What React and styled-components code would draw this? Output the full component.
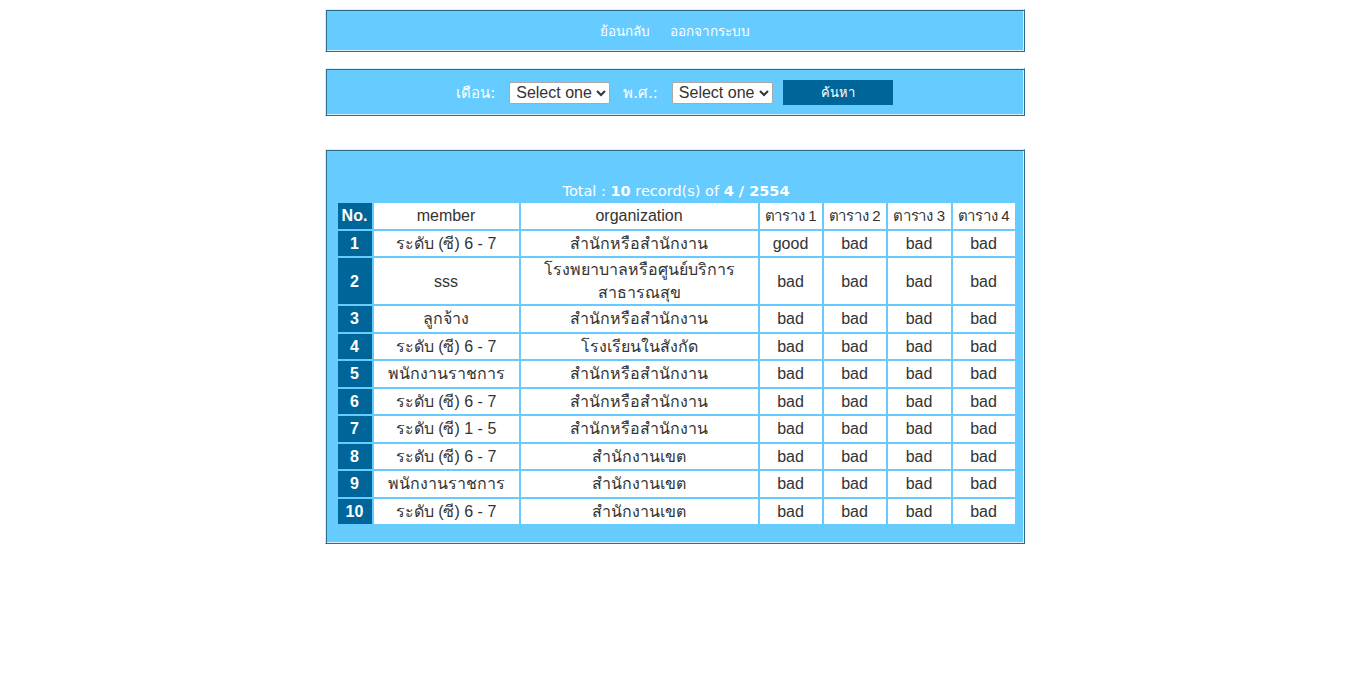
import React from "react";
import styled, { createGlobalStyle } from "styled-components";

const GlobalStyle = createGlobalStyle`
  body {
    margin: 8px;
    background: #fff;
    font-family: "Liberation Sans", Arial, sans-serif;
  }
`;

const rows = [
  ["ระดับ (ซี) 6 - 7", "สำนักหรือสำนักงาน", ["good", "bad", "bad", "bad"]],
  ["sss", "โรงพยาบาลหรือศูนย์บริการสาธารณสุข", ["bad", "bad", "bad", "bad"]],
  ["ลูกจ้าง", "สำนักหรือสำนักงาน", ["bad", "bad", "bad", "bad"]],
  ["ระดับ (ซี) 6 - 7", "โรงเรียนในสังกัด", ["bad", "bad", "bad", "bad"]],
  ["พนักงานราชการ", "สำนักหรือสำนักงาน", ["bad", "bad", "bad", "bad"]],
  ["ระดับ (ซี) 6 - 7", "สำนักหรือสำนักงาน", ["bad", "bad", "bad", "bad"]],
  ["ระดับ (ซี) 1 - 5", "สำนักหรือสำนักงาน", ["bad", "bad", "bad", "bad"]],
  ["ระดับ (ซี) 6 - 7", "สำนักงานเขต", ["bad", "bad", "bad", "bad"]],
  ["พนักงานราชการ", "สำนักงานเขต", ["bad", "bad", "bad", "bad"]],
  ["ระดับ (ซี) 6 - 7", "สำนักงานเขต", ["bad", "bad", "bad", "bad"]],
];

const colWidths = [34, 145, 237, 62, 62, 63, 62];

function App() {
  return (
    <>
      <GlobalStyle />
      <Page>
        <Panel $pad="12px 0 11px">
          <NavLink>ย้อนกลับ</NavLink>
          <NavLink>ออกจากระบบ</NavLink>
        </Panel>

        <Panel $pad="11px 0 10px">
          <SearchForm>
            <Label>เดือน:</Label>
            <Select defaultValue="">
              <option value="">Select one</option>
            </Select>
            <Label>พ.ศ.:</Label>
            <Select defaultValue="">
              <option value="">Select one</option>
            </Select>
            <SearchButton type="button">ค้นหา</SearchButton>
          </SearchForm>
        </Panel>

        <ResultPanel>
          <Table>
            <Caption>
              Total : <b>10</b> record(s) of <b>4 / 2554</b>
            </Caption>
            <colgroup>
              {colWidths.map((w, i) => (
                <col key={i} style={{ width: w }} />
              ))}
            </colgroup>
            <tbody>
              <tr>
                <NoCell>No.</NoCell>
                <Cell>member</Cell>
                <Cell>organization</Cell>
                <HeadCell>ตาราง 1</HeadCell>
                <HeadCell>ตาราง 2</HeadCell>
                <HeadCell>ตาราง 3</HeadCell>
                <HeadCell>ตาราง 4</HeadCell>
              </tr>
              {rows.map(([member, org, marks], i) => (
                <tr key={i}>
                  <NoCell>{i + 1}</NoCell>
                  <Cell>{member}</Cell>
                  <Cell>{org}</Cell>
                  {marks.map((m, j) => (
                    <Cell key={j}>{m}</Cell>
                  ))}
                </tr>
              ))}
            </tbody>
          </Table>
        </ResultPanel>
      </Page>
    </>
  );
}

export default App;

const Page = styled.div`
  width: 700px;
  margin: 1px auto 0;
`;

const Panel = styled.div`
  box-sizing: border-box;
  background: #66ccff;
  border: 1px solid;
  border-color: #d6eefa #2f6b8c #2f6b8c #d6eefa;
  box-shadow: inset 1px 1px 0 #2f6b8c, inset -1px -1px 0 #d6eefa;
  padding: ${(props) => props.$pad};
  margin-bottom: 16px;
  display: flex;
  justify-content: center;
  gap: 20px;
`;

const NavLink = styled.span`
  font-family: "DejaVu Sans", Tahoma, sans-serif;
  font-size: 13.5px;
  color: #fff;
  line-height: 18px;
`;

const SearchForm = styled.div`
  display: flex;
  align-items: center;
`;

const Label = styled.span`
  font-family: "DejaVu Sans", Tahoma, sans-serif;
  font-size: 15px;
  color: #fff;
  margin-right: 14px;
`;

const Select = styled.select`
  width: 101px;
  height: 22px;
  font-family: "Liberation Sans", Arial, sans-serif;
  font-size: 16px;
  color: #333;
  background: #fff;
  border: 1px solid #a9a9a9;
  border-radius: 2px;
  padding: 0 0 0 2px;
  margin-right: 13px;
`;

const SearchButton = styled.button`
  width: 110px;
  height: 25px;
  margin-left: -3px;
  background: #006699;
  color: #fff;
  border: none;
  font-family: "DejaVu Sans", Tahoma, sans-serif;
  font-size: 13px;
`;

const ResultPanel = styled(Panel)`
  display: block;
  padding: 32px 0 19px 10px;
  margin-top: 33px;
`;

const Table = styled.table`
  width: 681px;
  table-layout: fixed;
  border-spacing: 2px;
  margin: -2px 0;
`;

const Caption = styled.caption`
  font-family: "DejaVu Sans", Tahoma, sans-serif;
  font-size: 14.5px;
  color: #fff;
  padding: 2px 0 0;
  line-height: 19px;
`;

const Cell = styled.td`
  box-sizing: border-box;
  background: #fff;
  color: #333;
  font-family: "Liberation Sans", Arial, sans-serif;
  font-size: 16px;
  line-height: 23px;
  text-align: center;
  height: 25.5px;
  padding: 0 2px;
`;

const HeadCell = styled(Cell)`
  white-space: nowrap;
  padding: 0;
  font-size: 15px;
  letter-spacing: -0.3px;
`;

const NoCell = styled(Cell)`
  background: #006699;
  color: #fff;
  font-weight: bold;
`;
